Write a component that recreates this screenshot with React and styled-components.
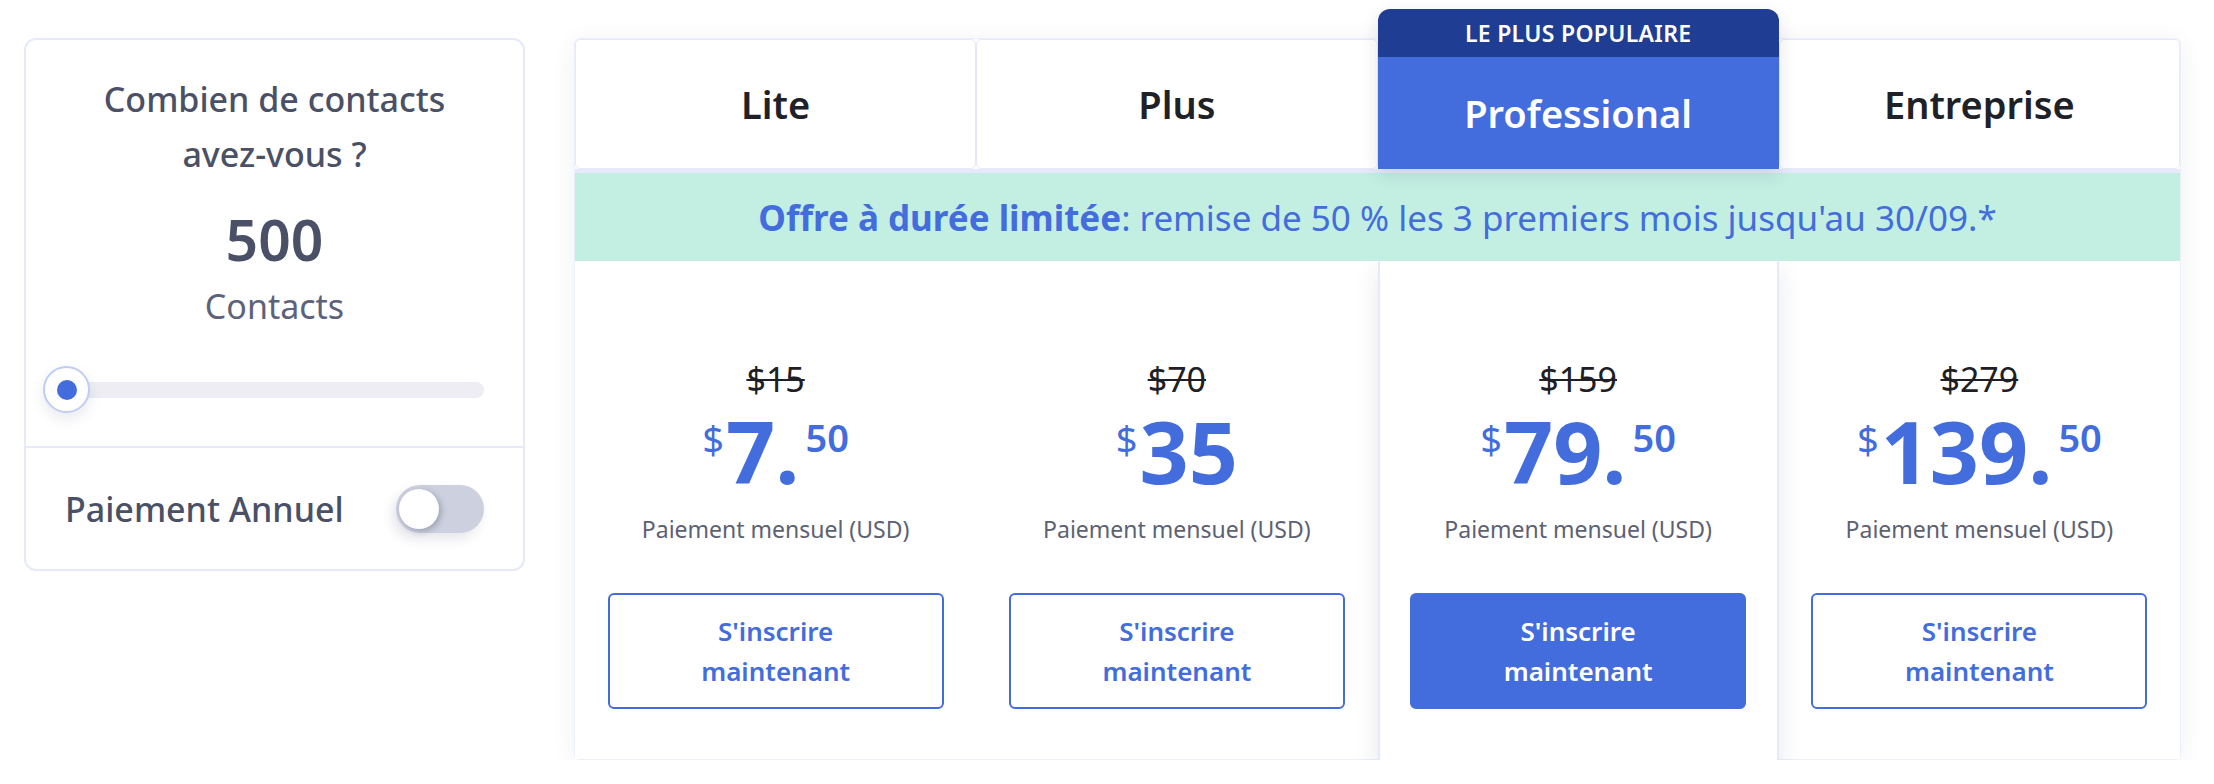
import React from 'react';
import styled, { createGlobalStyle } from 'styled-components';

const GlobalStyle = createGlobalStyle`
  html, body {
    margin: 0;
    padding: 0;
    background: #ffffff;
  }
  body {
    font-family: "Noto Sans", "Open Sans", Arial, sans-serif;
    -webkit-font-smoothing: antialiased;
  }
  * {
    box-sizing: border-box;
  }
`;

const BLUE = '#436ddd';
const NAVY = '#203d94';
const LINE = '#e5e9fa';

const Page = styled.div`
  display: flex;
  align-items: flex-start;
  gap: 49px;
  padding: 38px 0 0 24px;
`;

/* ---- left panel ---- */

const ContactCard = styled.div`
  width: 501px;
  border: 2px solid ${LINE};
  border-radius: 12px;
  background: #fff;
  color: #4a5065;
`;

const CardTop = styled.div`
  display: flex;
  flex-direction: column;
  align-items: center;
  padding: 32px 0 33px;
  border-bottom: 2px solid ${LINE};
`;

const Question = styled.div`
  font-size: 34px;
  font-weight: 500;
  line-height: 55px;
  text-align: center;
`;

const Count = styled.div`
  margin-top: 25px;
  font-size: 57px;
  font-weight: 600;
  line-height: 64px;
`;

const CountUnit = styled.div`
  margin-top: 13px;
  font-size: 34px;
  font-weight: 400;
  line-height: 44px;
  color: #5c627a;
`;

const Slider = styled.div`
  position: relative;
  align-self: stretch;
  height: 47px;
  margin: 38px 39px 0 17px;
  display: flex;
  align-items: center;
`;

const Track = styled.div`
  flex: 1;
  height: 16px;
  border-radius: 8px;
  background: #ededf3;
`;

const Thumb = styled.div`
  position: absolute;
  left: 0;
  top: 0;
  width: 47px;
  height: 47px;
  border-radius: 50%;
  background: #fff;
  border: 2px solid #bfcdf6;
  box-shadow: 0 6px 14px rgba(40, 50, 90, 0.1);
  display: flex;
  align-items: center;
  justify-content: center;

  &::after {
    content: '';
    width: 20px;
    height: 20px;
    border-radius: 50%;
    background: ${BLUE};
  }
`;

const ToggleRow = styled.div`
  height: 121px;
  display: flex;
  align-items: center;
  justify-content: space-between;
  padding: 0 39px;
  font-size: 34px;
  font-weight: 500;
`;

const Switch = styled.div`
  position: relative;
  width: 88px;
  height: 48px;
  border-radius: 24px;
  background: #cdd1df;
  box-shadow: -4px 6px 12px rgba(40, 50, 90, 0.12);
`;

const Knob = styled.div`
  position: absolute;
  left: 3px;
  top: 4px;
  width: 40px;
  height: 40px;
  border-radius: 50%;
  background: #fff;
  box-shadow: 2px 2px 6px rgba(30, 40, 70, 0.3);
`;

/* ---- pricing table ---- */

const Table = styled.div`
  width: 1607px;
  display: grid;
  grid-template-columns: repeat(4, 1fr);
  background: #fff;
  border: 1px solid #eceffa;
  border-radius: 6px;
  box-shadow: 0 4px 24px rgba(30, 40, 80, 0.07);
`;

const HeadCell = styled.div`
  height: 130px;
  display: flex;
  align-items: center;
  justify-content: center;
  border: 1px solid ${LINE};
  border-radius: 5px;
  font-size: 38px;
  font-weight: 600;
  color: #1f2128;
`;

const ProHead = styled.div`
  position: relative;
  z-index: 3;
  margin-top: -30px;
  display: flex;
  flex-direction: column;
  border-radius: 12px 12px 0 0;
  overflow: hidden;
  box-shadow: 0 6px 18px rgba(30, 40, 80, 0.12);
`;

const Badge = styled.div`
  height: 48px;
  display: flex;
  align-items: center;
  justify-content: center;
  background: ${NAVY};
  color: #fff;
  font-size: 23px;
  font-weight: 600;
  letter-spacing: 0.3px;
`;

const ProTitle = styled.div`
  flex: 1;
  height: 112px;
  display: flex;
  align-items: center;
  justify-content: center;
  background: ${BLUE};
  color: #fff;
  font-size: 38px;
  font-weight: 600;
`;

const Banner = styled.div`
  grid-column: 1 / -1;
  position: relative;
  z-index: 2;
  height: 92px;
  border-top: 4px solid ${LINE};
  display: flex;
  align-items: center;
  justify-content: center;
  background: #c3efe2;
  color: ${BLUE};
  font-size: 35px;

  b {
    font-weight: 700;
  }
`;

const PlanBody = styled.div`
  position: relative;
  z-index: ${(p) => (p.$featured ? 1 : 0)};
  display: flex;
  flex-direction: column;
  align-items: center;
  padding: 98px 0 ${(p) => (p.$featured ? 64 : 48)}px;
  margin-bottom: ${(p) => (p.$featured ? -16 : 0)}px;
  background: #fff;
  border-radius: ${(p) => (p.$featured ? '0 0 12px 12px' : '0')};
  border: ${(p) => (p.$featured ? `2px solid ${LINE}` : 'none')};
  border-top: none;
  box-shadow: ${(p) => (p.$featured ? '0 8px 26px rgba(30, 40, 80, 0.1)' : 'none')};
`;

const OldPrice = styled.div`
  font-size: 34px;
  line-height: 40px;
  color: #1e2026;
  text-decoration: line-through;
  text-decoration-thickness: 2px;
`;

const Price = styled.div`
  margin-top: 9px;
  display: flex;
  align-items: flex-start;
  color: ${BLUE};
  line-height: 1;
`;

const Currency = styled.span`
  margin-top: 12px;
  margin-right: 2px;
  font-size: 38px;
  font-weight: 400;
`;

const Amount = styled.span`
  font-size: 86px;
  font-weight: 700;
`;

const Cents = styled.span`
  margin-top: 10px;
  margin-left: 6px;
  font-size: 38px;
  font-weight: 600;
`;

const Period = styled.div`
  margin-top: 19px;
  font-size: 23px;
  line-height: 32px;
  color: #5c6173;
`;

const SignUp = styled.button`
  margin-top: 48px;
  width: 336px;
  height: 116px;
  border: 2px solid ${BLUE};
  border-radius: 6px;
  background: ${(p) => (p.$filled ? BLUE : '#fff')};
  color: ${(p) => (p.$filled ? '#fff' : BLUE)};
  font-family: inherit;
  font-size: 26px;
  font-weight: 600;
  line-height: 40px;
  cursor: pointer;
`;

const plans = [
  { name: 'Lite', old: '$15', amount: '7.', cents: '50' },
  { name: 'Plus', old: '$70', amount: '35' },
  { name: 'Professional', old: '$159', amount: '79.', cents: '50', featured: true },
  { name: 'Entreprise', old: '$279', amount: '139.', cents: '50' },
];

const App = () => {
  return (
    <>
      <GlobalStyle />
      <Page>
        <ContactCard>
          <CardTop>
            <Question>
              Combien de contacts
              <br />
              avez-vous ?
            </Question>
            <Count>500</Count>
            <CountUnit>Contacts</CountUnit>
            <Slider>
              <Track />
              <Thumb />
            </Slider>
          </CardTop>
          <ToggleRow>
            Paiement Annuel
            <Switch>
              <Knob />
            </Switch>
          </ToggleRow>
        </ContactCard>

        <Table>
          {plans.map((plan) =>
            plan.featured ? (
              <ProHead key={plan.name}>
                <Badge>LE PLUS POPULAIRE</Badge>
                <ProTitle>{plan.name}</ProTitle>
              </ProHead>
            ) : (
              <HeadCell key={plan.name}>{plan.name}</HeadCell>
            )
          )}

          <Banner>
            <span>
              <b>Offre à durée limitée</b>: remise de 50 % les 3 premiers mois jusqu'au 30/09.*
            </span>
          </Banner>

          {plans.map((plan) => (
            <PlanBody key={plan.name} $featured={plan.featured}>
              <OldPrice>{plan.old}</OldPrice>
              <Price>
                <Currency>$</Currency>
                <Amount>{plan.amount}</Amount>
                {plan.cents && <Cents>{plan.cents}</Cents>}
              </Price>
              <Period>Paiement mensuel (USD)</Period>
              <SignUp $filled={plan.featured}>
                S'inscrire
                <br />
                maintenant
              </SignUp>
            </PlanBody>
          ))}
        </Table>
      </Page>
    </>
  );
};

export default App;
